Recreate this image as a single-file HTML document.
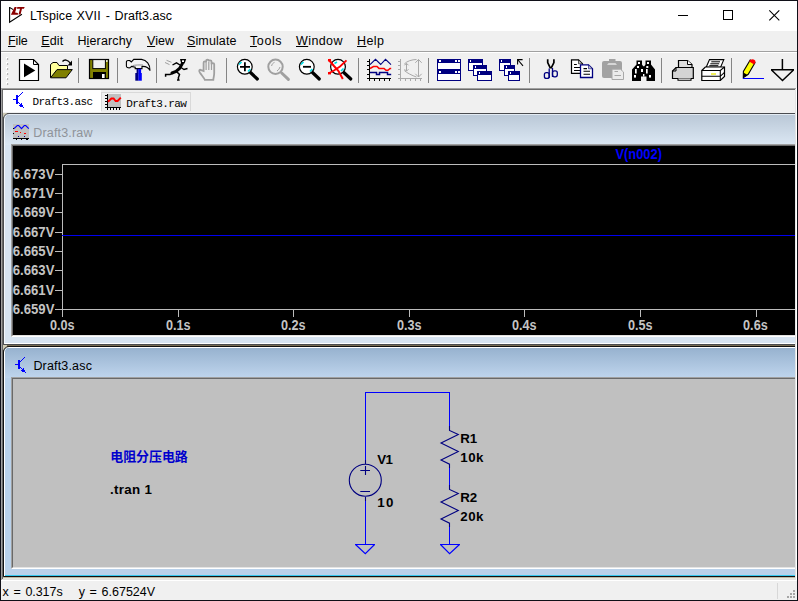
<!DOCTYPE html>
<html lang="zh">
<head>
<meta charset="utf-8">
<title>LTspice XVII - Draft3.asc</title>
<style>
*{margin:0;padding:0;box-sizing:border-box}
html,body{width:798px;height:601px;overflow:hidden;background:#f0f0f0}
body{position:relative;font-family:"Liberation Sans","Noto Sans CJK SC",sans-serif;font-size:12px;color:#000}
.abs{position:absolute}
.t{position:absolute;white-space:pre;line-height:1}
#frame{position:absolute;left:0;top:0;width:798px;height:601px;border:1px solid #101018;pointer-events:none;z-index:50}
#titlebar{left:1px;top:1px;width:796px;height:30px;background:#fff}
#menubar{left:1px;top:31px;width:796px;height:20px;background:#f0f0f0}
.mi{position:absolute;top:35px;font-size:12.5px;line-height:1;white-space:pre;letter-spacing:0}
.mi u{text-decoration:underline;text-decoration-thickness:1px;text-underline-offset:0.5px}
#toolbar{left:1px;top:53px;width:796px;height:35px;background:#f0f0f0}
.sep{position:absolute;top:58px;width:1px;height:25px;background:#858585}
.ic{position:absolute;overflow:visible}
/* MDI area */
#mdi{left:3px;top:90px;width:792px;height:489px;background:#786c52;overflow:hidden}
.tabfont{font-family:"Liberation Mono","Noto Sans CJK SC",monospace;font-size:11px;letter-spacing:-0.6px}
.uif{font-family:"Liberation Sans","Noto Sans CJK SC",sans-serif}
.bold{font-family:"Liberation Sans","Noto Sans CJK SC",sans-serif;font-weight:bold;font-size:13.33px}
</style>
</head>
<body>

<!-- ===== title bar ===== -->
<div class="abs" id="titlebar"></div>
<svg class="ic" style="left:8px;top:6px" width="18" height="18" viewBox="0 0 18 18">
  <path d="M1.6 1 V16.3 L13.9 8.2 M1.6 1.4 L5.2 3.6" fill="none" stroke="#000" stroke-width="1.1"/>
  <path d="M6.6 1 L8.7 1 L7.1 6.6 L9.9 7.1 L9.9 8.8 L2.9 8.8 Z" fill="#8b0000"/>
  <path d="M9.3 1 L16.7 1 L15.9 2.7 L14 2.7 L12.5 8.6 L10.5 8.6 L12 2.7 L8.9 2.7 Z" fill="#8b0000"/>
</svg>
<div class="t" id="title" style="left:0;top:10px;font-size:12.5px;width:200px;height:14px"><span class="t" style="left:30px;top:0;letter-spacing:.12px">LTspice</span><span class="t" style="left:26px;top:0"> </span><span class="t" style="left:76.6px;top:0;letter-spacing:.15px">XVII</span><span class="t" style="left:102px;top:0"> </span><span class="t" style="left:105.8px;top:0">-</span><span class="t" style="left:110px;top:0"> </span><span class="t" style="left:114.6px;top:0;letter-spacing:.05px">Draft3.asc</span></div>
<svg class="ic" style="left:670px;top:5px" width="120" height="22" viewBox="0 0 120 22">
  <path d="M8 10.5 H18" stroke="#000" stroke-width="1" fill="none"/>
  <rect x="53.5" y="5.5" width="9" height="9" stroke="#000" stroke-width="1" fill="none"/>
  <path d="M99.3 5.3 L109.3 15.3 M109.3 5.3 L99.3 15.3" stroke="#000" stroke-width="1.1" fill="none"/>
</svg>

<!-- ===== menu bar ===== -->
<div class="abs" id="menubar"></div>
<div class="mi" id="m1" style="left:8px;letter-spacing:-.15px"><u>F</u>ile</div>
<div class="mi" id="m2" style="left:41.2px;letter-spacing:.15px"><u>E</u>dit</div>
<div class="mi" id="m3" style="left:77.4px;letter-spacing:.15px">H<u>i</u>erarchy</div>
<div class="mi" id="m4" style="left:147px;letter-spacing:.05px"><u>V</u>iew</div>
<div class="mi" id="m5" style="left:187px;letter-spacing:.12px"><u>S</u>imulate</div>
<div class="mi" id="m6" style="left:250px;letter-spacing:.6px"><u>T</u>ools</div>
<div class="mi" id="m7" style="left:296px;letter-spacing:.4px"><u>W</u>indow</div>
<div class="mi" id="m8" style="left:357px;letter-spacing:.4px"><u>H</u>elp</div>
<div class="abs" style="left:1px;top:51px;width:796px;height:1px;background:#a0a0a0"></div>
<div class="abs" style="left:1px;top:52px;width:796px;height:1px;background:#fff"></div>

<!-- ===== toolbar ===== -->
<div class="abs" id="toolbar"></div>
<div class="sep" style="left:78px"></div>
<div class="sep" style="left:117px"></div>
<div class="sep" style="left:156px"></div>
<div class="sep" style="left:226px"></div>
<div class="sep" style="left:358px"></div>
<div class="sep" style="left:428px"></div>
<div class="sep" style="left:529px"></div>
<div class="sep" style="left:661px"></div>
<div class="sep" style="left:731px"></div>
<svg class="ic" style="left:0;top:52px" width="798" height="36" viewBox="0 52 798 36">
  <!-- grip -->
  <g fill="#fff"><rect x="6" y="57" width="2" height="2"/><rect x="6" y="62" width="2" height="2"/><rect x="6" y="67" width="2" height="2"/><rect x="6" y="72" width="2" height="2"/><rect x="6" y="77" width="2" height="2"/><rect x="6" y="82" width="2" height="2"/></g><g fill="#a4a4a4"><rect x="7" y="58.2" width="1.2" height="1.6"/><rect x="7" y="63.2" width="1.2" height="1.6"/><rect x="7" y="68.2" width="1.2" height="1.6"/><rect x="7" y="73.2" width="1.2" height="1.6"/><rect x="7" y="78.2" width="1.2" height="1.6"/><rect x="7" y="83.2" width="1.2" height="1.6"/></g>
  <!-- 1 run -->
  <g id="i-run">
    <path d="M19.5 59.5 H33.5 L38.5 64.5 V80.5 H19.5 Z" fill="#fff" stroke="#000" stroke-width="1.2"/>
    <path d="M33.5 59.5 V64.5 H38.5" fill="none" stroke="#000" stroke-width="1"/>
    <path d="M24 63.5 L35.3 70.4 L24 77.3 Z" fill="#000"/>
  </g>
  <!-- 2 open -->
  <g id="i-open">
    <path d="M50.5 77.5 V64.5 L53 62.5 H57 L59 65.5 H67.5 V69.5" fill="#ffff9a" stroke="#000" stroke-width="1"/>
    <path d="M50.5 77.8 L57 69.6 H72.3 L66 77.8 Z" fill="#808000" stroke="#000" stroke-width="1"/>
    <path d="M62.5 61.5 C64 59.5 68 59 70.5 63.5" fill="none" stroke="#000" stroke-width="1.3"/>
    <path d="M72 60.5 V65.5 H67.5 Z" fill="#000"/>
  </g>
  <!-- 3 save -->
  <g id="i-save">
    <rect x="89.5" y="59.5" width="19" height="19" fill="#808000" stroke="#000" stroke-width="1.2"/>
    <rect x="92.8" y="59.6" width="12.6" height="9" fill="#f0f0f0" stroke="#000" stroke-width="1"/>
    <rect x="93" y="72" width="13" height="6.5" fill="#000"/>
    <rect x="102" y="74" width="2.6" height="4" fill="#fff"/>
    <rect x="106" y="60.2" width="1.6" height="1.6" fill="#fff"/>
  </g>
  <!-- 4 hammer -->
  <g id="i-hammer">
    <path d="M126.4 62 C126.2 60.6 127.5 60.4 129.8 60.6 L131.3 62 L133.8 59.4 H141.5 C146.5 60 150.3 64.5 150 70.6 C148.5 67.2 145.5 66.2 142 66.4 V68.6 H135.2 V67.2 L131.5 66.4 L130 67.8 C128 68 126.4 67.6 126.4 66 Z" fill="#f4f4f4" stroke="#000" stroke-width="1.1"/>
    <path d="M132.5 65.6 C135 65 139 64.8 143 65" stroke="#909090" stroke-width="1" fill="none"/>
    <rect x="136.6" y="68.8" width="2" height="4.4" fill="#000080"/>
    <rect x="138.5" y="68.8" width="2.6" height="4.4" fill="#0000ff"/>
    <rect x="135.3" y="73" width="3.3" height="7.7" fill="#000080"/>
    <rect x="138.5" y="73" width="3.3" height="7.7" fill="#0000ff"/>
  </g>
  <!-- 5 running man -->
  <g id="i-man">
    <path d="M166.5 60.3 L171.5 62.3 M165 62.5 L169.5 64.6" stroke="#a0a0a0" stroke-width="1" fill="none"/>
    <path d="M180 59 H186.2 L184.6 63.6 H181.2 Z" fill="#000"/>
    <rect x="182" y="60.3" width="2" height="1.7" fill="#fff"/>
    <path d="M182.4 63.5 L179.5 68.5 L176 71.5 L172 73" stroke="#000" stroke-width="3" fill="none" stroke-linecap="round"/>
    <path d="M180 65 L176.5 62.8 L172.5 65" stroke="#000" stroke-width="1.4" fill="none"/>
    <path d="M181 67.5 L184 69.5 L187.5 68.5" stroke="#000" stroke-width="1.4" fill="none"/>
    <path d="M173 73 L170 74.6 H165.6 V76.8" stroke="#000" stroke-width="1.5" fill="none"/>
    <path d="M176.5 71.5 L179.5 74.5 L178.3 78 L178.8 80 H177" stroke="#000" stroke-width="1.5" fill="none"/>
  </g>
  <!-- 6 hand (disabled) -->
  <g id="i-hand" fill="none" stroke="#a0a0a0" stroke-width="1.8">
    <path d="M203.6 71 V62.8 C203.6 61 206.1 61 206.1 62.8 V61 C206.1 59.2 208.8 59.2 208.8 61 V61.6 C208.8 60 211.5 60 211.5 61.6 V64.2 C211.5 62.7 214.2 62.7 214.2 64.2 V73 C214.2 76 213.5 77.5 213.3 79.8 H204.8 C204.2 78 201.8 75.5 199.8 72.5 C198.4 70.2 199.8 69.2 201.2 70.2 Z"/>
    <path d="M206.1 63 V70 M208.8 62 V70 M211.5 64 V70" stroke-width="1.2"/>
  </g>
  <!-- 7 zoom in -->
  <g id="i-zin">
    <path d="M250.5 72.5 L257.3 79" stroke="#000" stroke-width="3.2" stroke-linecap="round"/>
    <circle cx="244.8" cy="66.8" r="7.4" fill="#fff" stroke="#000" stroke-width="1.2"/>
    <path d="M239 64.5 L241.5 62 M248 71.5 L250.3 69" stroke="#00e0e8" stroke-width="1.6"/>
    <path d="M240 66.8 H250 M244.9 62.3 V71.3" stroke="#000" stroke-width="1.8"/>
  </g>
  <!-- 8 zoom area (disabled) -->
  <g id="i-zarea" fill="none" stroke="#a0a0a0">
    <path d="M281.7 73 L288.4 79.4" stroke-width="3" stroke-linecap="round"/>
    <circle cx="275.5" cy="66.8" r="7.2" stroke-width="2"/>
    <path d="M271.6 66 C272 64 273 63 274.5 62.4 M277 71 C278.5 70 279.5 68.5 280 67" stroke-width="1"/>
  </g>
  <!-- 9 zoom out -->
  <g id="i-zout">
    <path d="M312.5 72.5 L319.3 79" stroke="#000" stroke-width="3.2" stroke-linecap="round"/>
    <circle cx="306.8" cy="66.8" r="7.4" fill="#fff" stroke="#000" stroke-width="1.2"/>
    <path d="M301 64.5 L303.5 62 M310 71.5 L312.3 69" stroke="#00e0e8" stroke-width="1.6"/>
    <path d="M303 66.8 H311" stroke="#000" stroke-width="1.8"/>
  </g>
  <!-- 10 zoom fit -->
  <g id="i-zfit">
    <path d="M343.8 72.5 L350.8 79" stroke="#000" stroke-width="3.2" stroke-linecap="round"/>
    <circle cx="338" cy="66.8" r="7.4" fill="#fff" stroke="#000" stroke-width="1.2"/>
    <path d="M334.5 63.5 L337 62 M341 71 L343.5 68.5" stroke="#00e0e8" stroke-width="1.6"/>
    <path d="M328.5 59.5 L334 66 L338.5 71 L342.8 79" stroke="#ff0000" stroke-width="2" fill="none"/>
    <path d="M346.5 60.3 L340 66.5 L334 70.5 L328.3 73.5" stroke="#ff0000" stroke-width="1.8" fill="none"/>
    <rect x="328" y="59" width="3" height="2.4" fill="#ff0000"/><rect x="328" y="72" width="3" height="2.4" fill="#ff0000"/>
  </g>
  <!-- 11 plot -->
  <g id="i-plot" fill="none">
    <path d="M369.5 59 V80.5 M367 78.7 H391 M367 61.5 H369 M367 65.5 H369 M367 69.5 H369 M367 74.5 H369 M374.5 79 V81 M379.5 79 V81 M384.5 79 V81 M389.5 79 V81" stroke="#000" stroke-width="1.3" shape-rendering="crispEdges"/>
    <path d="M370 64.7 L375.5 59.3 L380.7 64.5 L385.5 59.3 L391 64.7" stroke="#000080" stroke-width="1.1"/>
    <path d="M370 68.5 L373.5 66.5 H377 L379 68.4 H384 L386 70.3 H388 L390 68.5 H391.2" stroke="#ff0000" stroke-width="1.5"/>
    <path d="M370 72.5 H376.5 V74.6 H379.5 V72.5 H387.5 V74.6 H391.2" stroke="#000080" stroke-width="1.5"/>
  </g>
  <!-- 12 disabled eye -->
  <g id="i-eye" fill="none" stroke="#a8a8a8" stroke-width="1">
    <path d="M400.5 59 V80.5 M398 78.7 H421.5 M398 61.5 H400 M398 65.5 H400 M398 69.5 H400 M398 74.5 H400 M405.5 79 V81 M410.5 79 V81 M415.5 79 V81 M420.5 79 V81" shape-rendering="crispEdges"/>
    <path d="M404.3 64 C407 61 412 59.6 416.5 59.5 M404.3 70.5 C407 73 412 75.5 416.5 77"/>
    <path d="M406.5 63.5 V71 M404.5 65.3 L406.5 63.3 L408.5 65.3 M404.5 69.2 L406.5 71.2 L408.5 69.2"/>
    <path d="M418.5 59.5 V77 M415.3 62.8 L418.5 59.5 L421.7 62.8 M415.3 73.8 L418.5 77 L421.7 73.8"/>
  </g>
  <!-- 13 tile -->
  <g id="i-tile" shape-rendering="crispEdges">
    <rect x="437.5" y="59.5" width="23" height="10" fill="#fff" stroke="#000080" stroke-width="1"/>
    <rect x="437" y="59" width="24" height="4" fill="#000080"/>
    <rect x="437.5" y="70.5" width="23" height="10" fill="#fff" stroke="#000080" stroke-width="1"/>
    <rect x="437" y="70" width="24" height="4" fill="#000080"/>
    <g fill="#fff"><rect x="438.5" y="60" width="2" height="2"/><rect x="455" y="60" width="2" height="2"/><rect x="458" y="60" width="2" height="2"/><rect x="438.5" y="71" width="2" height="2"/><rect x="455" y="71" width="2" height="2"/><rect x="458" y="71" width="2" height="2"/></g>
  </g>
  <!-- 14 cascade -->
  <g id="i-casc" shape-rendering="crispEdges">
    <rect x="468.5" y="59.5" width="14" height="11" fill="#fff" stroke="#000080"/><rect x="468" y="59" width="15" height="4" fill="#000080"/><rect x="469.5" y="60.3" width="1.6" height="1.6" fill="#fff"/>
    <rect x="473.5" y="65.5" width="13" height="10" fill="#fff" stroke="#000080"/><rect x="473" y="65" width="14" height="4" fill="#000080"/><rect x="474.5" y="66.3" width="1.6" height="1.6" fill="#fff"/>
    <rect x="477.5" y="71.5" width="14" height="9" fill="#fff" stroke="#000080"/><rect x="477" y="71" width="15" height="4" fill="#000080"/><rect x="478.5" y="72.3" width="1.6" height="1.6" fill="#fff"/>
  </g>
  <!-- 15 cascade + arrow -->
  <g id="i-casc2" shape-rendering="crispEdges">
    <rect x="499.5" y="59.5" width="11" height="11" fill="#fff" stroke="#000080"/><rect x="499" y="59" width="12" height="4" fill="#000080"/><rect x="500.5" y="60.3" width="1.6" height="1.6" fill="#fff"/>
    <rect x="504.5" y="65.5" width="10" height="10" fill="#fff" stroke="#000080"/><rect x="504" y="65" width="11" height="4" fill="#000080"/><rect x="505.5" y="66.3" width="1.6" height="1.6" fill="#fff"/>
    <rect x="508.5" y="71.5" width="11" height="9" fill="#fff" stroke="#000080"/><rect x="508" y="71" width="12" height="4" fill="#000080"/><rect x="509.5" y="72.3" width="1.6" height="1.6" fill="#fff"/>
  </g>
  <path d="M517.6 64.6 V59.6 H522.6 M518 60 L523 65.8" stroke="#000" stroke-width="1.1" fill="none"/>
  <!-- 16 cut -->
  <g id="i-cut" fill="none">
    <path d="M547.7 59.3 V62.6 L550.5 68.3 M553.9 59.3 V62.6 L551 68.3" stroke="#000" stroke-width="1.7"/>
    <path d="M549.2 68.6 V78 M552.5 68 V77" stroke="#000080" stroke-width="1.3"/>
    <rect x="544.4" y="72.6" width="4.8" height="5.8" rx="2" stroke="#000080" stroke-width="1.3"/>
    <rect x="552.5" y="70.8" width="4.8" height="6" rx="2" stroke="#000080" stroke-width="1.3"/>
  </g>
  <!-- 17 copy -->
  <g id="i-copy">
    <path d="M571.5 59.8 H578.5 L582.5 63.8 V73.3 H571.5 Z" fill="#fff" stroke="#000" stroke-width="1.2"/>
    <path d="M578.5 59.8 V63.8 H582.5 Z" fill="#c0c0c0" stroke="#000" stroke-width=".6"/>
    <path d="M574 64.5 H576.8 M574 67.5 H580 M574 70.5 H580" stroke="#000" stroke-width="1.1"/>
    <path d="M580.5 64.8 H588.5 L592.5 68.8 V77.5 H580.5 Z" fill="#fff" stroke="#000080" stroke-width="1.3"/>
    <path d="M588.5 64.8 V68.8 H592.5 Z" fill="#c0c0c0" stroke="#000080" stroke-width=".6"/>
    <path d="M583.5 68.6 H587 M583.5 71.3 H590 M583.5 74.2 H590" stroke="#000" stroke-width="1.1"/>
  </g>
  <!-- 18 paste disabled -->
  <g id="i-paste">
    <rect x="602" y="61" width="20" height="17" rx="2" fill="#a2a2a2"/>
    <rect x="609" y="59" width="6.5" height="3" fill="#a2a2a2"/>
    <path d="M607 64.7 L608.5 63.2 H615.5 L617 64.7 Z" fill="#e8e8e8"/>
    <path d="M612 69.2 H620.5 L623.5 72 V79.5 H612 Z" fill="#ececec" stroke="#a8a8a8" stroke-width="1"/>
    <path d="M614.5 71.5 H618 M614.5 75.5 H621" stroke="#a8a8a8" stroke-width="1"/>
  </g>
  <!-- 19 binoculars -->
  <g id="i-find">
    <path d="M636.5 60.5 H642 V64.5 L643.2 66.3 H644.3 L645.5 64.5 V60.5 H651 V64.5 L655 69.5 V81 H646.5 V76.5 H641 V81 H632 V69.5 L636.5 64.5 Z" fill="#000"/>
    <g fill="#fff"><rect x="638" y="62" width="2" height="2"/><rect x="647" y="62" width="2" height="2"/><rect x="637" y="66" width="2" height="2"/><rect x="646.3" y="66" width="2" height="2"/><rect x="635" y="69" width="1.7" height="4.5"/><rect x="646" y="69" width="1.7" height="4.5"/><rect x="641" y="69" width="2" height="3"/><rect x="634" y="75" width="2" height="2.6"/><rect x="649" y="75" width="2" height="2.6"/><rect x="643" y="74" width="1.4" height="2.5"/></g>
  </g>
  <!-- 20 print setup -->
  <g id="i-psetup">
    <path d="M678.5 67.5 V60.5 H687.5 L692 64.5 V67.5" fill="#dcdcdc" stroke="#000" stroke-width="1.2"/>
    <path d="M687.5 60.5 V64.5 H692" fill="#fff" stroke="#000" stroke-width="1"/>
    <path d="M672.5 78.5 V71 L676 67.5 H693.3 V78.5 Z" fill="#d4d4d4" stroke="#000" stroke-width="1.2"/>
    <path d="M672.5 71 H676 V67.5" fill="none" stroke="#000" stroke-width="1"/>
    <path d="M678 78.5 V80.3 H691 V78.5" fill="#fff" stroke="#000" stroke-width="1.1"/>
  </g>
  <!-- 21 print -->
  <g id="i-print">
    <path d="M709.5 59.6 H723.8 L720.6 67.2 H706.2 Z" fill="#fff" stroke="#000" stroke-width="1.1"/>
    <path d="M711.3 61.8 H720 M710.3 63.8 H719.2 M709.3 65.7 H718.3" stroke="#000" stroke-width="1"/>
    <path d="M701.8 70.5 L705.3 67 H724.5 V76.5 L720.3 80.5 H701.8 Z" fill="#fff" stroke="#000" stroke-width="1.2"/>
    <path d="M701.8 70.5 H720.3 L724.5 67 M720.3 70.5 V80.5 M701.8 76.3 H720.3 L724.5 72.3" fill="none" stroke="#000" stroke-width="1.1"/>
    <path d="M711 74 H716" stroke="#e8e800" stroke-width="1.3"/>
  </g>
  <!-- 22 pencil -->
  <g id="i-pencil">
    <path d="M743.3 77.6 L743.4 71.5 L750.2 60 L755 62.8 L748.2 74.3 Z" fill="#ffff00" stroke="#000" stroke-width="1.1"/>
    <path d="M743.3 77.6 L743.4 72.5 L747.5 74.9 Z" fill="#000"/>
    <path d="M749.2 61.6 C750 58.5 755.5 58.5 755.5 62 L754.2 64.4 Z" fill="#ff0000"/>
    <path d="M743 78.5 H764" stroke="#0000ff" stroke-width="1" shape-rendering="crispEdges"/>
  </g>
  <!-- 23 ground -->
  <g id="i-gnd" fill="none" stroke="#000" stroke-width="1.5">
    <path d="M782.4 59 V69.7 M771 69.8 H794 M771.5 70 L782.5 80.5 L793.5 70"/>
  </g>
</svg>


<!-- sunken edge around MDI/tab area -->
<div class="abs" style="left:1px;top:88px;width:796px;height:1px;background:#a0a0a0"></div>
<div class="abs" style="left:2px;top:89px;width:794px;height:1px;background:#696969"></div>
<div class="abs" style="left:1px;top:88px;width:1px;height:493px;background:#a0a0a0"></div>
<div class="abs" style="left:2px;top:89px;width:1px;height:491px;background:#696969"></div>
<div class="abs" style="left:795px;top:89px;width:1px;height:491px;background:#e3e3e3"></div>
<div class="abs" style="left:796px;top:88px;width:1px;height:493px;background:#fff"></div>
<div class="abs" style="left:2px;top:579px;width:794px;height:1px;background:#e3e3e3"></div>
<div class="abs" style="left:1px;top:580px;width:796px;height:1px;background:#fff"></div>

<!-- ===== MDI area ===== -->
<div class="abs" id="mdi">
<!-- tab strip (abs y 90..112) -->
<div class="abs" style="left:0;top:0;width:792px;height:23px;background:#f0f0f0"></div>
<div class="abs" style="left:0;top:0;width:98px;height:22px;background:#fff"></div>
<div class="abs" style="left:98px;top:2px;width:90px;height:19px;background:#f0f0f0;border:1px solid #d9d9d9;border-bottom:none"></div>
<svg class="ic" style="left:9px;top:1px" width="16" height="18" viewBox="0 0 16 18" shape-rendering="crispEdges"><path fill="#0000ff" d="M1 8h1v1h-1zM2 8h1v1h-1zM3 8h1v1h-1zM4 4h1v1h-1zM4 5h1v1h-1zM4 6h1v1h-1zM4 7h1v1h-1zM4 8h1v1h-1zM4 9h1v1h-1zM4 10h1v1h-1zM4 11h1v1h-1zM4 12h1v1h-1zM5 4h1v1h-1zM5 5h1v1h-1zM5 6h1v1h-1zM5 7h1v1h-1zM5 8h1v1h-1zM5 9h1v1h-1zM5 10h1v1h-1zM5 11h1v1h-1zM5 12h1v1h-1zM6 5h1v1h-1zM6 11h1v1h-1zM7 4h1v1h-1zM7 12h1v1h-1zM7 14h1v1h-1zM8 3h1v1h-1zM8 13h1v1h-1zM8 14h1v1h-1zM8 15h1v1h-1zM9 2h1v1h-1zM9 12h1v1h-1zM9 13h1v1h-1zM9 14h1v1h-1zM9 15h1v1h-1zM10 1h1v1h-1zM10 14h1v1h-1zM10 15h1v1h-1zM11 16h1v1h-1z"/></svg>
<div class="t tabfont" id="tab1" style="left:29.5px;top:7.4px">Draft3.asc</div>
<svg class="ic" style="left:102px;top:4px" width="16" height="16" viewBox="0 0 16 16" shape-rendering="crispEdges">
  <rect x="3" y="0" width="13" height="13" fill="#c0c0c0"/>
  <path d="M2.5 0 V14 M0 13.5 H16 M0 1.5 H2 M0 4.5 H2 M0 7.5 H2 M0 10.5 H2 M2.5 14 V16 M5.5 14 V16 M8.5 14 V16 M11.5 14 V16 M14.5 14 V16" stroke="#000" stroke-width="1" fill="none"/>
  <path d="M3 7.7 L6.4 4.5 H8.6 L10.6 7 H12.6 L15.8 3.6" stroke="#ff0000" stroke-width="1.9" fill="none" shape-rendering="auto"/>
</svg>
<div class="t tabfont" id="tab2" style="left:123.3px;top:9.4px">Draft3.raw</div>

<div class="abs" style="left:0;top:23px;width:4px;height:4px;background:#cfcbb4"></div><div class="abs" style="left:0;top:255px;width:4px;height:5px;background:#cfcbb4"></div>
<!-- child window 1 : Draft3.raw (inactive) abs y 113..344 -->
<div class="abs win" id="w1" style="left:0;top:23px;width:900px;height:232px;border:1px solid #4a4c50;border-radius:6px 6px 0 0;background:linear-gradient(to bottom,#e3ebf3 0,#e3ebf3 1px,#bac8d7 1px,#dbe7f3 31px,#d7e4f2 31px);box-shadow:inset 1px 0 0 #f4f8fc, inset 0 -1px 0 #fff"></div>
<svg class="ic" style="left:10px;top:34px" width="16" height="16" viewBox="0 0 16 16" shape-rendering="crispEdges">
  <rect x="0" y="0" width="16" height="14" fill="#c0c0c0"/>
  <path d="M0 14.5 H16 M3.5 15 V16 M8.5 15 V16 M13 15.5 H15" stroke="#000" stroke-width="1" fill="none"/>
  <path d="M1 4.6 L4.3 1.5 H5.7 L8.5 4.6 L11.3 1.5 H12.7 L15.8 4.6" stroke="#0000ff" stroke-width="1.15" fill="none" shape-rendering="auto"/>
  <path d="M0 4.5 H1 M0 9.5 H1" stroke="#000" stroke-width="1"/>
  <path d="M2 7.5 H5 M7 8.5 H8 M11 9.5 H13" stroke="#ff0000" stroke-width="1" fill="none"/>
  <path d="M5 12.5 H6 M11 12.5 H12" stroke="#000090" stroke-width="1" fill="none"/>
</svg>
<div class="t uif" id="wt1" style="left:30.3px;top:37px;font-size:12.5px;letter-spacing:.17px;color:#8f9399">Draft3.raw</div>
<!-- client edge + client (abs 12..,146..334) -->
<div class="abs" style="left:8px;top:54px;width:900px;height:193px;background:#000;border-top:1px solid #a0a0a0;border-left:1px solid #a0a0a0;border-bottom:1px solid #fff"></div>
<div class="abs" style="left:9px;top:55px;width:900px;height:191px;background:#000;border-top:1px solid #696969;border-left:1px solid #696969;border-bottom:1px solid #e3e3e3"></div>

<!-- child window 2 : Draft3.asc (active) abs y 346..576 -->
<div class="abs win" id="w2" style="left:0;top:256px;width:900px;height:231px;border:1px solid #111;border-radius:6px 6px 0 0;background:linear-gradient(to bottom,#fff 0,#fff 1px,#97b2cf 1px,#bfd5ed 31px,#b9d1ea 31px);box-shadow:inset 1px 0 0 #fff, inset 0 -1px 0 #35c8ee"></div>
<svg class="ic" style="left:11px;top:266px" width="16" height="18" viewBox="0 0 16 18" shape-rendering="crispEdges"><path fill="#0000ff" d="M1 8h1v1h-1zM2 8h1v1h-1zM3 8h1v1h-1zM4 4h1v1h-1zM4 5h1v1h-1zM4 6h1v1h-1zM4 7h1v1h-1zM4 8h1v1h-1zM4 9h1v1h-1zM4 10h1v1h-1zM4 11h1v1h-1zM4 12h1v1h-1zM5 4h1v1h-1zM5 5h1v1h-1zM5 6h1v1h-1zM5 7h1v1h-1zM5 8h1v1h-1zM5 9h1v1h-1zM5 10h1v1h-1zM5 11h1v1h-1zM5 12h1v1h-1zM6 5h1v1h-1zM6 11h1v1h-1zM7 4h1v1h-1zM7 12h1v1h-1zM7 14h1v1h-1zM8 3h1v1h-1zM8 13h1v1h-1zM8 14h1v1h-1zM8 15h1v1h-1zM9 2h1v1h-1zM9 12h1v1h-1zM9 13h1v1h-1zM9 14h1v1h-1zM9 15h1v1h-1zM10 1h1v1h-1zM10 14h1v1h-1zM10 15h1v1h-1zM11 16h1v1h-1z"/></svg>
<div class="t uif" id="wt2" style="left:30.4px;top:270px;font-size:12.5px;letter-spacing:.17px;color:#000">Draft3.asc</div>
<div class="abs" style="left:8px;top:287px;width:900px;height:192px;background:#c0c0c0;border-top:1px solid #a0a0a0;border-left:1px solid #a0a0a0;border-bottom:1px solid #fff"></div>
<div class="abs" style="left:9px;top:288px;width:900px;height:190px;background:#c0c0c0;border-top:1px solid #696969;border-left:1px solid #696969;border-bottom:1px solid #e3e3e3"></div>

<!-- drawing layer in absolute screenshot coordinates -->
<svg class="ic" style="left:0;top:0" width="792" height="489" viewBox="3 90 792 489">
  <!-- plot axes -->
  <g stroke="#bcbcbc" stroke-width="1" fill="none" shape-rendering="crispEdges">
    <path d="M62.5 164 V317 M62 164.5 H800 M55 309.5 H800"/>
    <path d="M55 174.5 H62 M55 193.5 H62 M55 212.5 H62 M55 232.5 H62 M55 251.5 H62 M55 270.5 H62 M55 290.5 H62"/>
    <path d="M178.5 309 V317 M293.5 309 V317 M409.5 309 V317 M524.5 309 V317 M640.5 309 V317 M756.5 309 V317"/>
  </g>
  <path d="M62 235.5 H800" stroke="#0000f0" stroke-width="1" shape-rendering="crispEdges"/>
  <g class="bold" font-weight="bold" font-size="14" style="font-size:14px" fill="#c4c4c4" text-anchor="end">
    <text x="54.4" y="179" textLength="41.6" lengthAdjust="spacingAndGlyphs">6.673V</text>
    <text x="54.4" y="198" textLength="41.6" lengthAdjust="spacingAndGlyphs">6.671V</text>
    <text x="54.4" y="217" textLength="41.6" lengthAdjust="spacingAndGlyphs">6.669V</text>
    <text x="54.4" y="237" textLength="41.6" lengthAdjust="spacingAndGlyphs">6.667V</text>
    <text x="54.4" y="256" textLength="41.6" lengthAdjust="spacingAndGlyphs">6.665V</text>
    <text x="54.4" y="275" textLength="41.6" lengthAdjust="spacingAndGlyphs">6.663V</text>
    <text x="54.4" y="295" textLength="41.6" lengthAdjust="spacingAndGlyphs">6.661V</text>
    <text x="54.4" y="314" textLength="41.6" lengthAdjust="spacingAndGlyphs">6.659V</text>
  </g>
  <g class="bold" font-weight="bold" font-size="14" style="font-size:14px" fill="#c4c4c4" text-anchor="middle">
    <text x="62.3" y="329.6" textLength="24.6" lengthAdjust="spacingAndGlyphs">0.0s</text>
    <text x="178.3" y="329.6" textLength="24.6" lengthAdjust="spacingAndGlyphs">0.1s</text>
    <text x="293.3" y="329.6" textLength="24.6" lengthAdjust="spacingAndGlyphs">0.2s</text>
    <text x="409.3" y="329.6" textLength="24.6" lengthAdjust="spacingAndGlyphs">0.3s</text>
    <text x="524.3" y="329.6" textLength="24.6" lengthAdjust="spacingAndGlyphs">0.4s</text>
    <text x="640.3" y="329.6" textLength="24.6" lengthAdjust="spacingAndGlyphs">0.5s</text>
    <text x="755.4" y="329.6" textLength="24.6" lengthAdjust="spacingAndGlyphs">0.6s</text>
  </g>
  <text class="bold" font-weight="bold" style="font-size:14px" fill="#0000ff" x="615.4" y="159" textLength="46.6" lengthAdjust="spacingAndGlyphs">V(n002)</text>

  <!-- schematic -->
  <g stroke="#0000ff" stroke-width="1" fill="none" shape-rendering="crispEdges">
    <path d="M365.5 460 V392.5 H449.5 V426"/>
    <path d="M365.5 501 V544 M449.5 468 V485 M449.5 527 V544"/>
    <path d="M355 544.5 H375 M440 544.5 H460"/>
  </g>
  <g stroke="#0000ff" stroke-width="1.15" fill="none">
    <path d="M355.5 544.5 L365.3 553.7 L374.6 544.5 M440.5 544.5 L449.6 553.7 L459.5 544.5"/>
  </g>
  <g stroke="#000080" stroke-width="1.1" fill="none">
    <path d="M449.5 426 V430.5 L458.3 434.6 L441 443 L458.3 451.5 L441 460 L449.5 464.2 V468"/>
    <path d="M449.5 485 V489.5 L458.3 493.6 L441 502 L458.3 510.5 L441 519 L449.5 523.2 V527"/>
    <circle cx="365.3" cy="480.2" r="16"/>
    <path d="M365.5 460 V464 M365.5 497 V501 M360.3 470.5 H370 M365.5 466 V475 M360.3 491.5 H370"/>
  </g>
  <g class="bold" font-weight="bold" font-size="13.33" fill="#000" letter-spacing="-0.2">
    <text x="460.3" y="443">R1</text>
    <text x="460.3" y="462" letter-spacing="0.45">10k</text>
    <text x="460.3" y="502">R2</text>
    <text x="460.3" y="521" letter-spacing="0.45">20k</text>
    <text x="377.3" y="464.3" letter-spacing="-0.7">V1</text>
    <text x="377.2" y="506.8" letter-spacing="1.3">10</text>
    <text x="110" y="493.8" letter-spacing="0.3">.tran 1</text>
  </g>
  <text font-family="'Liberation Sans','Noto Sans CJK SC',sans-serif" font-weight="bold" font-size="13" fill="#0000cd" x="110.3" y="460.9" letter-spacing="-0.1">电阻分压电路</text>
</svg>

</div>

<div class="abs" style="left:3px;top:577px;width:792px;height:1px;background:#bdb9a3"></div>
<div class="abs" style="left:3px;top:578px;width:792px;height:1px;background:#e9e7dd"></div>
<!-- ===== status bar ===== -->
<div class="abs" style="left:1px;top:581px;width:796px;height:19px;background:#f0f0f0"></div>
<div class="t" id="status" style="left:0;top:586px;font-size:12.5px;width:300px;height:14px"><span class="t" style="left:2.6px;top:0">x</span><span class="t" style="left:10px;top:0"> </span><span class="t" style="left:13.4px;top:0">=</span><span class="t" style="left:21px;top:0"> </span><span class="t" style="left:25.4px;top:0;letter-spacing:-.05px">0.317s</span><span class="t" style="left:63px;top:0">    </span><span class="t" style="left:78.8px;top:0">y</span><span class="t" style="left:86px;top:0"> </span><span class="t" style="left:89.6px;top:0">=</span><span class="t" style="left:97px;top:0"> </span><span class="t" style="left:101.6px;top:0">6.67524V</span></div>
<div class="abs" style="left:777px;top:583px;width:1px;height:16px;background:#d7d7d7"></div>
<svg class="ic" style="left:783px;top:587px" width="13" height="13" viewBox="783 587 13 13" shape-rendering="crispEdges">
  <g fill="#a6a6a6"><rect x="793" y="590" width="2" height="2"/><rect x="790" y="593" width="2" height="2"/><rect x="793" y="593" width="2" height="2"/><rect x="787" y="596" width="2" height="2"/><rect x="790" y="596" width="2" height="2"/><rect x="793" y="596" width="2" height="2"/></g>
</svg>

<div id="frame"></div>
</body>
</html>
